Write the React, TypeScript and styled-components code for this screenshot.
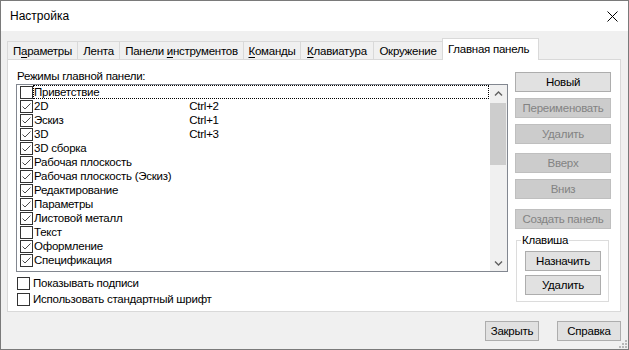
import styled, { createGlobalStyle } from "styled-components";

const UiFont = `"Liberation Sans", "Noto Sans", sans-serif`;
const TextSize = "11.5px";
const Tracking = "-0.25px";

const GlobalStyle = createGlobalStyle`
  html, body {
    margin: 0;
    padding: 0;
    background: #ffffff;
  }
  body {
    font-family: ${UiFont};
    font-size: ${TextSize};
    letter-spacing: ${Tracking};
    color: #000000;
  }
`;

const Window = styled.div`
  position: relative;
  width: 629px;
  height: 350px;
  box-sizing: border-box;
  border: 1px solid #7a7a7a;
  display: flex;
  flex-direction: column;
  background: #f0f0f0;
  overflow: hidden;
`;

const TitleBar = styled.div`
  height: 30px;
  flex: 0 0 30px;
  background: #ffffff;
  display: flex;
  align-items: center;
  justify-content: space-between;
  padding: 0 10px 0 9px;
  font-size: 12px;
  letter-spacing: 0;
  line-height: 16px;
`;

const Body = styled.div`
  flex: 1;
  display: flex;
  flex-direction: column;
  padding: 5px 7px 0 6px;
`;

const TabStrip = styled.div`
  display: flex;
  align-items: flex-end;
  height: 23px;
  flex: 0 0 23px;
`;

const Tab = styled.div<{ $w: number; $active?: boolean }>`
  width: ${(p) => p.$w}px;
  box-sizing: border-box;
  height: ${(p) => (p.$active ? 22 : 18)}px;
  margin-right: -1px;
  margin-bottom: ${(p) => (p.$active ? -1 : 0)}px;
  border: 1px solid #d9d9d9;
  border-bottom: none;
  background: ${(p) => (p.$active ? "#ffffff" : "#f0f0f0")};
  display: flex;
  align-items: center;
  justify-content: ${(p) => (p.$active ? "flex-start" : "center")};
  padding: ${(p) => (p.$active ? "0 0 2px 5px" : "0")};
  white-space: nowrap;
  position: relative;
  z-index: ${(p) => (p.$active ? 1 : 0)};
  line-height: 16px;
`;

const Mn = styled.span`
  text-decoration: underline;
  text-underline-offset: 2px;
`;

const Panel = styled.div`
  height: 253px;
  flex: 0 0 253px;
  box-sizing: border-box;
  border: 1px solid #d9d9d9;
  background: #ffffff;
  display: flex;
  gap: 7px;
  padding: 0 9px 0 8px;
`;

const LeftCol = styled.div`
  width: 492px;
  display: flex;
  flex-direction: column;
  padding-top: 8px;
`;

const Caption = styled.div`
  line-height: 16px;
  height: 16px;
  padding-left: 1px;
`;

const ListBox = styled.div`
  height: 188px;
  box-sizing: border-box;
  border: 1px solid #828790;
  display: flex;
  background: #ffffff;
`;

const Items = styled.div`
  flex: 1;
  display: flex;
  flex-direction: column;
`;

const Row = styled.div`
  height: 14px;
  display: flex;
  align-items: center;
  padding-left: 3px;
`;

const RowLabel = styled.div<{ $focus?: boolean }>`
  flex: 1;
  height: 14px;
  box-sizing: border-box;
  margin-right: 1px;
  border: 1px dotted ${(p) => (p.$focus ? "#000000" : "transparent")};
  display: flex;
  align-items: center;
  line-height: 12px;
  white-space: nowrap;
`;

const Name = styled.span`
  width: 140px;
`;

const Shortcut = styled.span`
  width: 60px;
  text-align: center;
`;

const Box = styled.span`
  width: 13px;
  height: 13px;
  flex: 0 0 13px;
  box-sizing: border-box;
  border: 1px solid #333333;
  background: #ffffff;
  display: flex;
  align-items: center;
  justify-content: center;
`;

const ScrollBar = styled.div`
  width: 17px;
  background: #f0f0f0;
  display: flex;
  flex-direction: column;
`;

const ScrollArrow = styled.div`
  height: 17px;
  display: flex;
  align-items: center;
  justify-content: center;
`;

const ScrollTrack = styled.div`
  flex: 1;
  display: flex;
  flex-direction: column;
`;

const Thumb = styled.div`
  height: 62px;
  margin: 1px 1px 0 0;
  background: #cdcdcd;
`;

const OptionRow = styled.div<{ $first?: boolean }>`
  height: 16px;
  display: flex;
  align-items: center;
  gap: 3px;
  padding-left: 1px;
  margin-top: ${(p) => (p.$first ? 3 : 0)}px;
  line-height: 14px;
`;

const RightCol = styled.div`
  width: 96px;
  display: flex;
  flex-direction: column;
  padding-top: 12px;
`;

const Button = styled.button<{ $w?: number; $mt?: number }>`
  width: ${(p) => (p.$w ? `${p.$w}px` : "100%")};
  height: 20px;
  margin: ${(p) => p.$mt ?? 0}px 0 0 0;
  padding: 0;
  box-sizing: border-box;
  font-family: ${UiFont};
  font-size: ${TextSize};
  letter-spacing: ${Tracking};
  line-height: 16px;
  white-space: nowrap;
  color: #000000;
  background: #e1e1e1;
  border: 1px solid #adadad;
  border-radius: 0;

  &:disabled {
    color: #838383;
    background: #cccccc;
    border-color: #bfbfbf;
  }
`;

const Group = styled.fieldset`
  margin: 4px 2px 0 1px;
  padding: 0 7px 6px 8px;
  border: 1px solid #dcdcdc;
  min-width: 0;
  display: flex;
  flex-direction: column;
`;

const GroupTitle = styled.legend`
  padding: 0 1px;
  margin-left: -4px;
  line-height: 14px;
`;

const Footer = styled.div`
  display: flex;
  justify-content: flex-end;
  gap: 18px;
  padding-top: 9px;
`;

const Grip = styled.svg`
  position: absolute;
  right: 1px;
  bottom: 1px;
`;

type Item = { name: string; on: boolean; key?: string };

const items: Item[] = [
  { name: "Приветствие", on: false },
  { name: "2D", on: true, key: "Ctrl+2" },
  { name: "Эскиз", on: true, key: "Ctrl+1" },
  { name: "3D", on: true, key: "Ctrl+3" },
  { name: "3D сборка", on: true },
  { name: "Рабочая плоскость", on: true },
  { name: "Рабочая плоскость (Эскиз)", on: true },
  { name: "Редактирование", on: true },
  { name: "Параметры", on: true },
  { name: "Листовой металл", on: true },
  { name: "Текст", on: false },
  { name: "Оформление", on: true },
  { name: "Спецификация", on: true },
];

const Check = ({ on }: { on: boolean }) => (
  <Box>
    {on && (
      <svg width="11" height="11" viewBox="0 0 11 11">
        <polyline points="1.5,5.5 4,8 9.5,2.5" fill="none" stroke="#4a4a4a" strokeWidth="1" />
      </svg>
    )}
  </Box>
);

const Chevron = ({ down }: { down?: boolean }) => (
  <svg width="9" height="6" viewBox="0 0 9 6">
    <polyline
      points={down ? "1,1.5 4.5,5 8,1.5" : "1,4.5 4.5,1 8,4.5"}
      fill="none"
      stroke="#606060"
      strokeWidth="1.4"
    />
  </svg>
);

export default function App() {
  return (
    <>
      <GlobalStyle />
      <Window>
        <TitleBar>
          <span>Настройка</span>
          <svg width="11" height="11" viewBox="0 0 11 11">
            <path d="M0.5 0.5 L10.5 10.5 M10.5 0.5 L0.5 10.5" stroke="#000" strokeWidth="1" />
          </svg>
        </TitleBar>
        <Body>
          <TabStrip>
            <Tab $w={71}>
              <span>
                П<Mn>а</Mn>раметры
              </span>
            </Tab>
            <Tab $w={43}>Лента</Tab>
            <Tab $w={125}>
              <span>
                Панели <Mn>и</Mn>нструментов
              </span>
            </Tab>
            <Tab $w={58}>
              <span>
                <Mn>К</Mn>оманды
              </span>
            </Tab>
            <Tab $w={74}>
              <span>
                <Mn>К</Mn>лавиатура
              </span>
            </Tab>
            <Tab $w={70}>Окружение</Tab>
            <Tab $w={97} $active>
              Главная панель
            </Tab>
          </TabStrip>
          <Panel>
            <LeftCol>
              <Caption>Режимы главной панели:</Caption>
              <ListBox>
                <Items>
                  {items.map((it, i) => (
                    <Row key={it.name}>
                      <Check on={it.on} />
                      <RowLabel $focus={i === 0}>
                        <Name>{it.name}</Name>
                        {it.key && <Shortcut>{it.key}</Shortcut>}
                      </RowLabel>
                    </Row>
                  ))}
                </Items>
                <ScrollBar>
                  <ScrollArrow>
                    <Chevron />
                  </ScrollArrow>
                  <ScrollTrack>
                    <Thumb />
                  </ScrollTrack>
                  <ScrollArrow>
                    <Chevron down />
                  </ScrollArrow>
                </ScrollBar>
              </ListBox>
              <OptionRow $first>
                <Check on={false} />
                <span>Показывать подписи</span>
              </OptionRow>
              <OptionRow>
                <Check on={false} />
                <span>Использовать стандартный шрифт</span>
              </OptionRow>
            </LeftCol>
            <RightCol>
              <Button>Новый</Button>
              <Button $mt={6} disabled>
                Переименовать
              </Button>
              <Button $mt={6} disabled>
                Удалить
              </Button>
              <Button $mt={9} disabled>
                Вверх
              </Button>
              <Button $mt={6} disabled>
                Вниз
              </Button>
              <Button $mt={10} disabled>
                Создать панель
              </Button>
              <Group>
                <GroupTitle>Клавиша</GroupTitle>
                <Button $w={76} $mt={4}>
                  Назначить
                </Button>
                <Button $w={76} $mt={4}>
                  Удалить
                </Button>
              </Group>
            </RightCol>
          </Panel>
          <Footer>
            <Button $w={54}>Закрыть</Button>
            <Button $w={64}>Справка</Button>
          </Footer>
        </Body>
        <Grip width="8" height="8" viewBox="0 0 8 8">
          <rect x="6" y="0" width="2" height="2" fill="#b8b8b8" />
          <rect x="3" y="3" width="2" height="2" fill="#b8b8b8" />
          <rect x="6" y="3" width="2" height="2" fill="#b8b8b8" />
          <rect x="0" y="6" width="2" height="2" fill="#b8b8b8" />
          <rect x="3" y="6" width="2" height="2" fill="#b8b8b8" />
          <rect x="6" y="6" width="2" height="2" fill="#b8b8b8" />
        </Grip>
      </Window>
    </>
  );
}
